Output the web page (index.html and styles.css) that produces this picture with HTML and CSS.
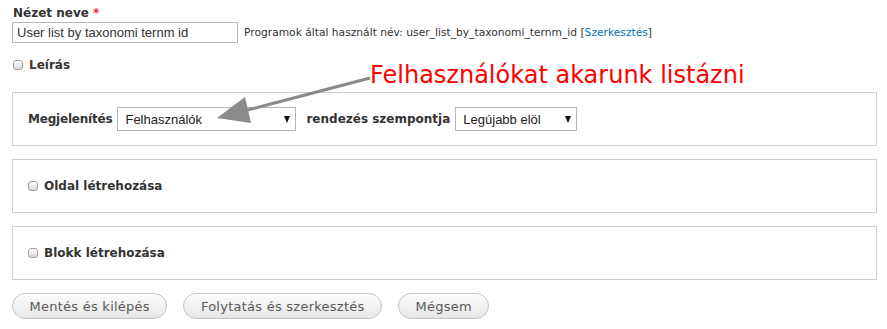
FILE: index.html
```html
<!DOCTYPE html>
<html lang="hu">
<head>
  <meta charset="UTF-8">
  <title>Nézet hozzáadása</title>
  <link rel="stylesheet" href="styles.css">
</head>
<body>

<div class="page">
  <div class="field">
    <label class="field-label">Nézet neve <span class="required">*</span></label>
    <div class="name-row">
      <input class="text-input" type="text" value="User list by taxonomi ternm id">
      <span class="machine-name">Programok által használt név: user_list_by_taxonomi_ternm_id [<a href="#">Szerkesztés</a>]</span>
    </div>
  </div>

  <label class="check-row">
    <span class="checkbox"></span>
    <span class="check-label">Leírás</span>
  </label>

  <div class="panel first">
    <span class="panel-label tight">Megjelenítés</span>
    <span class="select wide">Felhasználók<span class="caret"></span></span>
    <span class="panel-label gap">rendezés szempontja</span>
    <span class="select narrow">Legújabb elöl<span class="caret"></span></span>
  </div>

  <div class="panel">
    <label class="check-row inner">
      <span class="checkbox"></span>
      <span class="check-label">Oldal létrehozása</span>
    </label>
  </div>

  <div class="panel">
    <label class="check-row inner">
      <span class="checkbox"></span>
      <span class="check-label">Blokk létrehozása</span>
    </label>
  </div>

  <div class="actions">
    <button class="btn">Mentés és kilépés</button>
    <button class="btn">Folytatás és szerkesztés</button>
    <button class="btn">Mégsem</button>
  </div>

  <!-- annotation over the form -->
  <div class="note">Felhasználókat akarunk listázni</div>
  <svg class="note-arrow" width="887" height="329" viewBox="0 0 887 329">
    <line x1="370" y1="78" x2="240" y2="112" stroke="#8a8a8a" stroke-width="3"/>
    <polygon points="217,118 245,97 251,123" fill="#8a8a8a"/>
  </svg>
</div>

</body>
</html>
```

FILE: styles.css
```css
* { margin: 0; padding: 0; box-sizing: border-box; }
body {
  font-family: 'DejaVu Sans', sans-serif;
  color: #333;
  background: #fff;
}
.page {
  position: relative;
  width: 887px;
  height: 329px;
  padding: 0 10px 0 12px;
}
.field {
  padding-top: 5px;
}
.field-label {
  display: block;
  font-size: 12px;
  font-weight: bold;
  line-height: 16px;
  margin-bottom: 1px;
  margin-left: 1px;
}
.required {
  color: #e22;
}
.name-row {
  display: flex;
  align-items: center;
}
.text-input {
  width: 226px;
  height: 21px;
  border: 1px solid #b8b8b8;
  padding: 0 4px;
  font-family: 'Liberation Sans', sans-serif;
  font-size: 13px;
  color: #333;
}
.machine-name {
  margin-left: 6px;
  font-size: 10.7px;
  color: #333;
}
.machine-name a {
  color: #0074bd;
  text-decoration: none;
}
.check-row {
  display: flex;
  align-items: center;
  margin-top: 14px;
  margin-left: 1px;
  line-height: 16px;
}
.check-row.inner {
  margin: 0;
}
.checkbox {
  display: inline-block;
  width: 10px;
  height: 10px;
  border: 1px solid #a2a2a2;
  border-radius: 3px;
  background: linear-gradient(#ffffff, #d6d6d6);
  margin-right: 6px;
}
.check-label {
  font-size: 12px;
  font-weight: bold;
}
.panel {
  display: flex;
  align-items: center;
  height: 54px;
  border: 1px solid #cfcfcf;
  padding: 0 16px 0 15px;
  margin-top: 13px;
  font-size: 12px;
}
.panel.first {
  margin-top: 19px;
}
.panel-label {
  font-weight: bold;
  margin-right: 5px;
}
.panel-label.tight {
  letter-spacing: -0.2px;
}
.panel-label.gap {
  margin-left: 10px;
}
.select {
  display: flex;
  align-items: center;
  height: 24px;
  border: 1px solid #b4b4b4;
  background: #fff;
  padding: 0 5px 0 7px;
  font-family: 'Liberation Sans', sans-serif;
  font-size: 13px;
  color: #222;
}
.select.wide { width: 179px; }
.select.narrow { width: 122px; }
.caret {
  margin-left: auto;
  width: 0;
  height: 0;
  border-left: 3.5px solid transparent;
  border-right: 3.5px solid transparent;
  border-top: 7px solid #111;
}
.actions {
  display: flex;
  gap: 16px;
  margin-top: 13px;
}
.btn {
  height: 26px;
  padding: 0 16.5px;
  border: 1px solid #c4c4c4;
  border-radius: 13px;
  background: linear-gradient(#fdfdfd, #e6e6e6);
  font-family: 'DejaVu Sans', sans-serif;
  font-size: 13px;
  letter-spacing: 0.25px;
  color: #5a5a5a;
  cursor: pointer;
}
.note {
  position: absolute;
  left: 370px;
  top: 61px;
  font-size: 24px;
  line-height: 28px;
  color: #ff0000;
  white-space: nowrap;
}
.note-arrow {
  position: absolute;
  left: 0;
  top: 0;
  pointer-events: none;
}
```
